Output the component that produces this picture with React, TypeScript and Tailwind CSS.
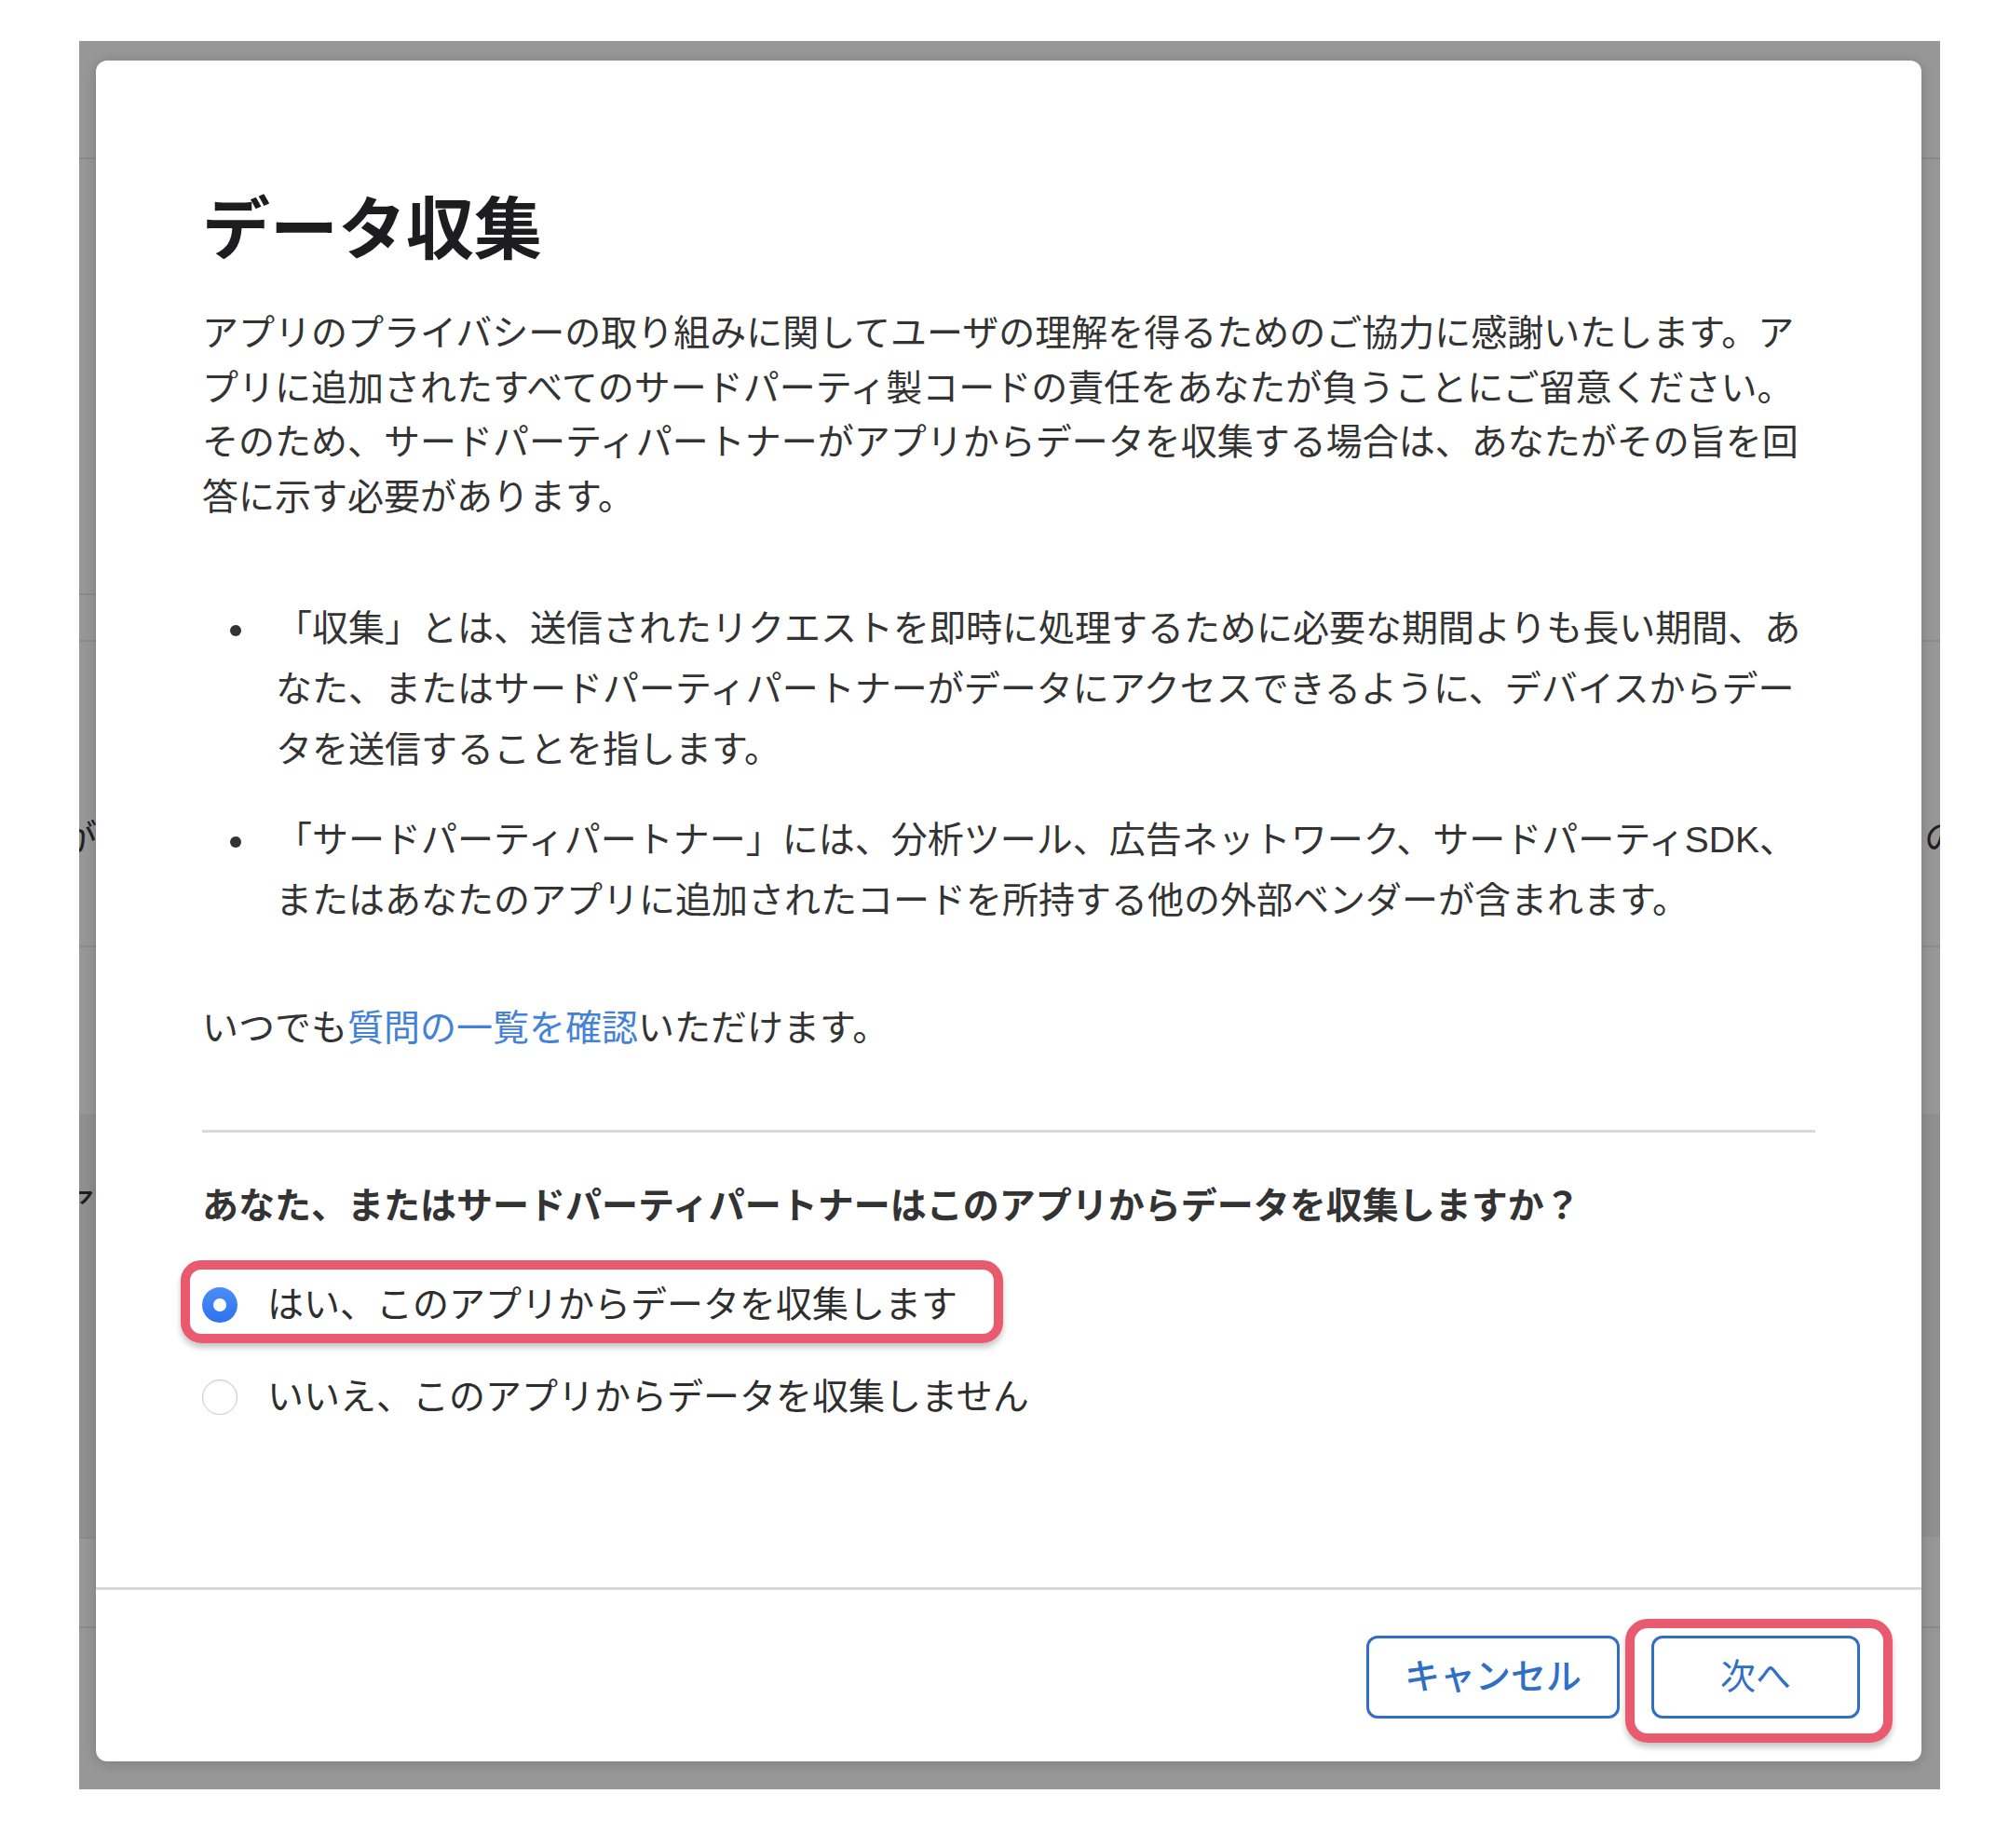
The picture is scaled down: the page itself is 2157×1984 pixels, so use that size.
export default function App() {
  const body = "text-[39px] leading-[58.5px] text-[#333333]";
  return (
    <div className="w-[2157px] h-[1984px] bg-white pt-[44px] pl-[85px] font-['Liberation_Sans','Noto_Sans_CJK_JP',sans-serif]">
      <div className="relative w-[1998px] h-[1877px] overflow-hidden bg-[#979797] pt-[21px] pl-[18px]">
        {/* dimmed page behind the dialog */}
        <div className="absolute left-0 right-0 top-[1152px] h-[454px] bg-[#8f8f8f]" />
        <div className="absolute left-0 right-0 top-[125px] h-[2px] bg-[#8a8a8a]" />
        <div className="absolute left-0 w-[40px] top-[593px] h-[2px] bg-[#8a8a8a]" />
        <div className="absolute left-0 right-0 top-[643px] h-[2px] bg-[#8a8a8a]" />
        <div className="absolute left-0 right-0 top-[971px] h-[2px] bg-[#8a8a8a]" />
        <div className="absolute left-0 w-[40px] top-[1606px] h-[2px] bg-[#8a8a8a]" />
        <div className="absolute left-0 right-0 top-[1702px] h-[2px] bg-[#8a8a8a]" />
        <span className="absolute left-[-20px] top-[827px] text-[39px] leading-[58px] text-[#1f1f1f]">が</span>
        <span className="absolute left-[1981px] top-[827px] text-[39px] leading-[58px] text-[#1f1f1f]">の</span>
        <span className="absolute left-[-22px] top-[1221px] text-[39px] leading-[58px] text-[#1f1f1f]">ア</span>

        <div className="relative flex flex-col w-[1960px] h-[1826px] bg-white rounded-[12px] shadow-[0_2px_14px_rgba(0,0,0,0.18)]">
          <div className="flex-1 px-[114px] pt-[139px]">
            <h1 className="text-[73px] leading-[86px] font-bold text-[#1d1d1f]">データ収集</h1>
            <p className={`mt-[39px] ${body}`}>
              アプリのプライバシーの取り組みに関してユーザの理解を得るためのご協力に感謝いたします。アプリに追加されたすべてのサードパーティ製コードの責任をあなたが負うことにご留意ください。そのため、サードパーティパートナーがアプリからデータを収集する場合は、あなたがその旨を回答に示す必要があります。
            </p>
            <ul className="mt-[79px] flex flex-col gap-[32px]">
              <li className="flex text-[39px] leading-[65px] text-[#333333]">
                <span className="flex h-[65px] w-[79px] shrink-0 items-center pl-[30px] pt-[4px]">
                  <span className="block h-[12px] w-[12px] rounded-full bg-[#333333]" />
                </span>
                <span>
                  「収集」とは、送信されたリクエストを即時に処理するために必要な期間よりも長い期間、あなた、またはサードパーティパートナーがデータにアクセスできるように、デバイスからデータを送信することを指します。
                </span>
              </li>
              <li className="flex text-[39px] leading-[65px] text-[#333333]">
                <span className="flex h-[65px] w-[79px] shrink-0 items-center pl-[30px] pt-[4px]">
                  <span className="block h-[12px] w-[12px] rounded-full bg-[#333333]" />
                </span>
                <span>
                  「サードパーティパートナー」には、分析ツール、広告ネットワーク、サードパーティSDK、またはあなたのアプリに追加されたコードを所持する他の外部ベンダーが含まれます。
                </span>
              </li>
            </ul>
            <p className={`mt-[76px] ${body}`}>
              いつでも<a className="text-[#4382d6]">質問の一覧を確認</a>いただけます。
            </p>
            <div className="mt-[79px] h-[3px] bg-[#dadada]" />
            <p className={`mt-[50px] font-semibold ${body}`}>
              あなた、またはサードパーティパートナーはこのアプリからデータを収集しますか？
            </p>
            <div className="mt-[48px] flex flex-col gap-[40.5px]">
              <div className="relative flex h-[58.5px] items-center">
                <span className="flex h-[38px] w-[38px] shrink-0 items-center justify-center rounded-full bg-gradient-to-b from-[#4a8df8] to-[#2f72ee]">
                  <span className="block h-[14px] w-[14px] rounded-full bg-white" />
                </span>
                <span className={`ml-[32px] font-normal text-[39px] leading-[58.5px] text-[#2e2e2e]`}>はい、このアプリからデータを収集します</span>
                <span className="pointer-events-none absolute left-[-23px] top-[-19px] h-[89px] w-[883px] rounded-[22px] border-[10px] border-[#ea5a6e] shadow-[0_5px_6px_rgba(0,0,0,0.22)]" />
              </div>
              <div className="relative flex h-[58.5px] items-center">
                <span className="block h-[38px] w-[38px] shrink-0 rounded-full border border-[#c9c9c9] bg-white shadow-[inset_0_1px_2px_rgba(0,0,0,0.08)]" />
                <span className={`ml-[32px] font-normal text-[39px] leading-[58.5px] text-[#2e2e2e]`}>いいえ、このアプリからデータを収集しません</span>
              </div>
            </div>
          </div>
          <div className="flex justify-end gap-[34px] border-t-[3px] border-[#d8d8d8] pt-[49px] pb-[46px] pr-[66px]">
            <button className="flex h-[89px] w-[272px] items-center justify-center rounded-[12px] border-[3px] border-[#2f6fc6] bg-white text-[38px] font-medium text-[#2f6fc6]">
              キャンセル
            </button>
            <div className="relative">
              <button className="flex h-[89px] w-[224px] items-center justify-center rounded-[12px] border-[3px] border-[#2f6fc6] bg-white text-[38px] font-normal text-[#2f6fc6]">
                次へ
              </button>
              <span className="pointer-events-none absolute left-[-28px] top-[-18px] right-[-35px] bottom-[-26px] rounded-[24px] border-[10px] border-[#ea5a6e] shadow-[0_5px_6px_rgba(0,0,0,0.22)]" />
            </div>
          </div>
        </div>
      </div>
    </div>
  );
}
